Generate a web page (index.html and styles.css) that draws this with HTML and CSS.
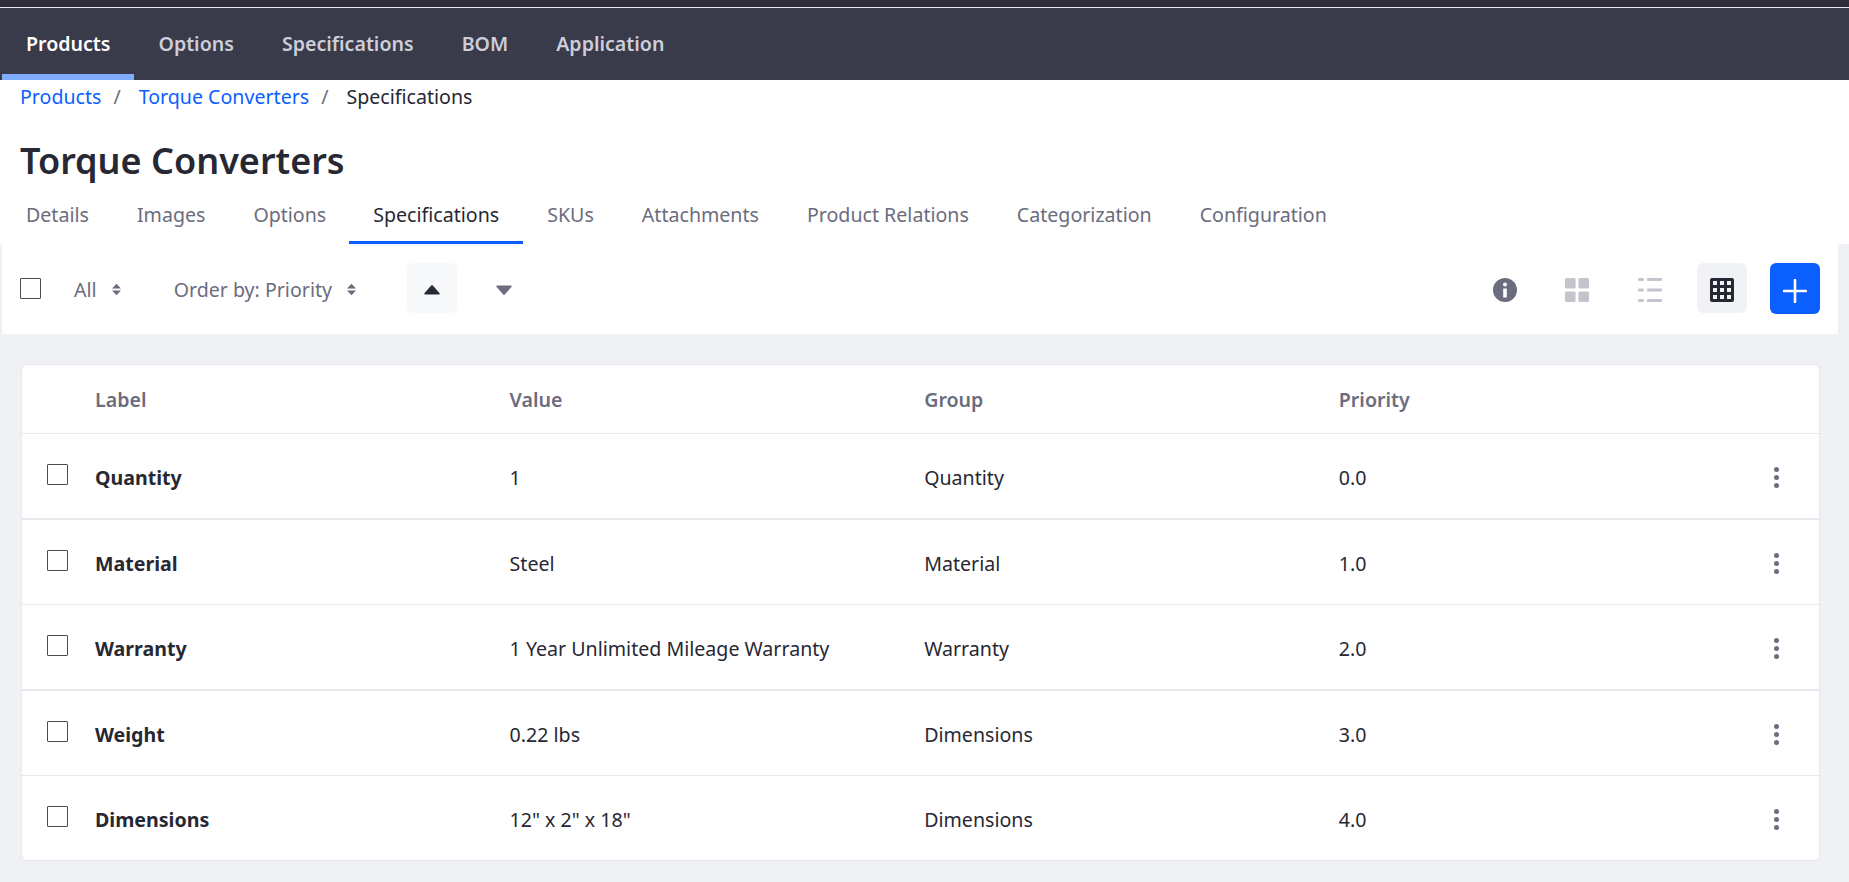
FILE: index.html
```html
<!DOCTYPE html>
<html lang="en">
<head>
<meta charset="utf-8">
<title>Torque Converters - Specifications</title>
<link rel="stylesheet" href="styles.css">
</head>
<body>
<div class="topstrip"></div>
<nav class="nav">
  <a class="nav-item active">Products</a>
  <a class="nav-item">Options</a>
  <a class="nav-item">Specifications</a>
  <a class="nav-item">BOM</a>
  <a class="nav-item">Application</a>
</nav>
<header class="head">
  <div class="crumbs">
    <a class="crumb-link">Products</a><span class="sep">/</span>
    <a class="crumb-link">Torque Converters</a><span class="sep">/</span>
    <span class="crumb-cur">Specifications</span>
  </div>
  <h1 class="title">Torque Converters</h1>
  <div class="tabs">
    <a class="tab">Details</a>
    <a class="tab">Images</a>
    <a class="tab">Options</a>
    <a class="tab active">Specifications</a>
    <a class="tab">SKUs</a>
    <a class="tab">Attachments</a>
    <a class="tab">Product Relations</a>
    <a class="tab">Categorization</a>
    <a class="tab">Configuration</a>
  </div>
</header>
<section class="toolbar">
  <input type="checkbox" class="check" aria-label="Select all">
  <button class="filter filter-all">All
    <svg class="updown" viewBox="0 0 10 14"><path d="M5 .5 10 5.800H0zM5 13.500 0 8.200H10z"/></svg>
  </button>
  <button class="filter filter-order">Order by: Priority
    <svg class="updown" viewBox="0 0 10 14"><path d="M5 .5 10 5.800H0zM5 13.500 0 8.200H10z"/></svg>
  </button>
  <button class="icon-btn sort-up"><svg class="tri" viewBox="0 0 16 10"><path d="M7.200 .6a1.100 1.100 0 0 1 1.600 0l6.600 7.300c.6.700.2 1.700-.8 1.700H1.400c-1 0-1.400-1-.8-1.700z"/></svg></button>
  <button class="icon-btn sort-down"><svg class="tri" viewBox="0 0 16 10"><path d="M7.200 9.400a1.100 1.100 0 0 0 1.600 0l6.600-7.300c.6-.7.200-1.700-.8-1.700H1.400c-1 0-1.400 1-.8 1.700z"/></svg></button>
  <div class="spacer"></div>
  <button class="icon-btn info"><svg class="ico" viewBox="0 0 24 24"><path fill-rule="evenodd" d="M12 0a12 12 0 1 1 0 24 12 12 0 0 1 0-24zm0 4.500a2 2 0 1 0 0 4 2 2 0 0 0 0-4zM10.200 10.500v9h3.600v-9z"/></svg></button>
  <button class="icon-btn view-cards"><svg class="ico" viewBox="0 0 24 24"><rect width="10.600" height="10.600" rx="1.500"/><rect x="13.400" width="10.600" height="10.600" rx="1.500"/><rect y="13.400" width="10.600" height="10.600" rx="1.500"/><rect x="13.400" y="13.400" width="10.600" height="10.600" rx="1.500"/></svg></button>
  <button class="icon-btn view-list"><svg class="ico" viewBox="0 0 24 24"><rect width="6" height="3" rx="1.500"/><rect x="9" width="15" height="3" rx="1"/><rect y="10.500" width="6" height="3" rx="1.500"/><rect x="9" y="10.500" width="15" height="3" rx="1"/><rect y="21" width="6" height="3" rx="1.500"/><rect x="9" y="21" width="15" height="3" rx="1"/></svg></button>
  <button class="icon-btn view-table"><svg class="ico" viewBox="0 0 24 24"><path fill-rule="evenodd" d="M2 0h20a2 2 0 0 1 2 2v20a2 2 0 0 1-2 2H2a2 2 0 0 1-2-2V2a2 2 0 0 1 2-2zM3 3v4h4V3zm7 0v4h4V3zm7 0v4h4V3zM3 10v4h4v-4zm7 0v4h4v-4zm7 0v4h4v-4zM3 17v4h4v-4zm7 0v4h4v-4zm7 0v4h4v-4z"/></svg></button>
  <button class="add"><svg class="ico" viewBox="0 0 24 24"><path d="M12 1v22M1 12h22" fill="none" stroke="#fff" stroke-width="2.600" stroke-linecap="round"/></svg></button>
</section>
<main class="main">
  <div class="card">
    <div class="row header"><span></span><span>Label</span><span>Value</span><span>Group</span><span>Priority</span><span></span></div>
    <div class="row thick">
      <span class="cell-check"><input type="checkbox" class="check"></span><strong>Quantity</strong><span>1</span><span>Quantity</span><span>0.0</span>
      <span class="kebab"><i></i><i></i><i></i></span>
    </div>
    <div class="row">
      <span class="cell-check"><input type="checkbox" class="check"></span><strong>Material</strong><span>Steel</span><span>Material</span><span>1.0</span>
      <span class="kebab"><i></i><i></i><i></i></span>
    </div>
    <div class="row thick">
      <span class="cell-check"><input type="checkbox" class="check"></span><strong>Warranty</strong><span>1 Year Unlimited Mileage Warranty</span><span>Warranty</span><span>2.0</span>
      <span class="kebab"><i></i><i></i><i></i></span>
    </div>
    <div class="row">
      <span class="cell-check"><input type="checkbox" class="check"></span><strong>Weight</strong><span>0.22 lbs</span><span>Dimensions</span><span>3.0</span>
      <span class="kebab"><i></i><i></i><i></i></span>
    </div>
    <div class="row last">
      <span class="cell-check"><input type="checkbox" class="check"></span><strong>Dimensions</strong><span>12" x 2" x 18"</span><span>Dimensions</span><span>4.0</span>
      <span class="kebab"><i></i><i></i><i></i></span>
    </div>
  </div>
</main>
</body>
</html>
```
FILE: styles.css
```css
* { box-sizing: border-box; }
html, body { margin: 0; height: 100%; }
body {
  background: #f0f1f5;
  color: #272833;
  font-family: "Noto Sans", "Open Sans", sans-serif;
  font-size: 19.600px;
  overflow: hidden;
}
a { text-decoration: none; }
button { font: inherit; border: 0; background: none; padding: 0; color: inherit; }

.topstrip { height: 7px; background: #2d2e3a; }
.nav {
  height: 73px;
  background: #393a4a;
  border-top: 1px solid #e7e7ed;
  display: flex;
  padding: 0 2px;
}
.nav-item {
  color: #cdced9;
  font-weight: 600;
  padding: 22px 24px 0;
  border-bottom: 6px solid transparent;
}
.nav-item.active { color: #fff; border-bottom-color: #80acff; }

.head { background: #fff; height: 164px; padding: 0 20px; }
.crumbs { height: 34px; padding-top: 3px; display: flex; }
.crumb-link { color: #0b5fff; }
.crumb-cur { color: #272833; }
.sep { color: #6b6c7e; margin: 0 18px 0 12px; }
.title { margin: 0; padding-top: 22px; font-size: 36px; line-height: 50px; font-weight: 600; height: 81px; }
.tabs { display: flex; margin-left: -20px; padding-left: 2px; }
.tab {
  color: #6b6c7e;
  padding: 0 24px;
  height: 49px;
  line-height: 39px;
  border-bottom: 3px solid transparent;
}
.tab.active { color: #272833; border-bottom-color: #0b5fff; margin-left: -1px; }

.toolbar {
  margin: 0 11px 0 2px;
  height: 90px;
  background: #fff;
  display: flex;
  align-items: center;
  padding: 0 18px 2px 18px;
}
.check {
  appearance: none;
  width: 21px;
  height: 21px;
  margin: 0;
  border: 1px solid #4c4c4c;
  border-radius: 1px;
  background: #fff;
  display: block;
}
.filter { color: #6b6c7e; display: flex; align-items: center; gap: 15px; padding-top: 2px; }
.filter-all { margin-left: 33px; }
.filter-order { margin-left: 53px; }
.updown { width: 9px; height: 13px; fill: #6b6c7e; }
.icon-btn { width: 50px; height: 50px; border-radius: 6px; display: flex; align-items: center; justify-content: center; padding-top: 4px; }
.sort-up { background: #f7f8f9; margin-left: 51px; fill: #272833; }
.sort-down { margin-left: 22px; fill: #6b6c7e; }
.tri { width: 16px; height: 10px; display: block; }
.spacer { flex: 1; }
.ico { width: 24px; height: 24px; display: block; }
.info { fill: #6b6c7e; }
.view-cards { fill: #c4c5cc; margin-left: 22px; }
.view-list { fill: #c4c5cc; margin-left: 23px; }
.view-table { fill: #272833; background: #f1f2f5; margin-left: 22px; }
.add { width: 50px; height: 51px; background: #0b5fff; border-radius: 6px; margin: 1px 0 0 23px; display: flex; align-items: center; justify-content: center; padding-top: 5px; }

.main { padding: 30px 30px 0 21px; }
.card {
  background: #fff;
  border-radius: 6px;
  border: 1px solid #e7e7ed;
  width: 1799px;
  height: 497px;
}
.row {
  display: grid;
  grid-template-columns: 73px 414.600px 414.600px 414.600px 1fr 60px;
  align-items: center;
  height: 85.500px;
  padding-top: 4px;
  border-bottom: 1px solid #e7e7ed;
}
.row.thick { border-bottom-width: 2px; }
.row.last { border-bottom: 0; height: 84px; padding-top: 3px; }
.row.header { height: 69px; padding-top: 0; color: #6b6c7e; font-weight: 600; }
.row strong { font-weight: 700; }
.cell-check { padding-left: 25px; margin-top: -6px; }
.kebab { display: flex; flex-direction: column; align-items: center; gap: 3px; padding-right: 26px; }
.kebab i { width: 5px; height: 5px; border-radius: 50%; background: #6b6c7e; display: block; }
```
